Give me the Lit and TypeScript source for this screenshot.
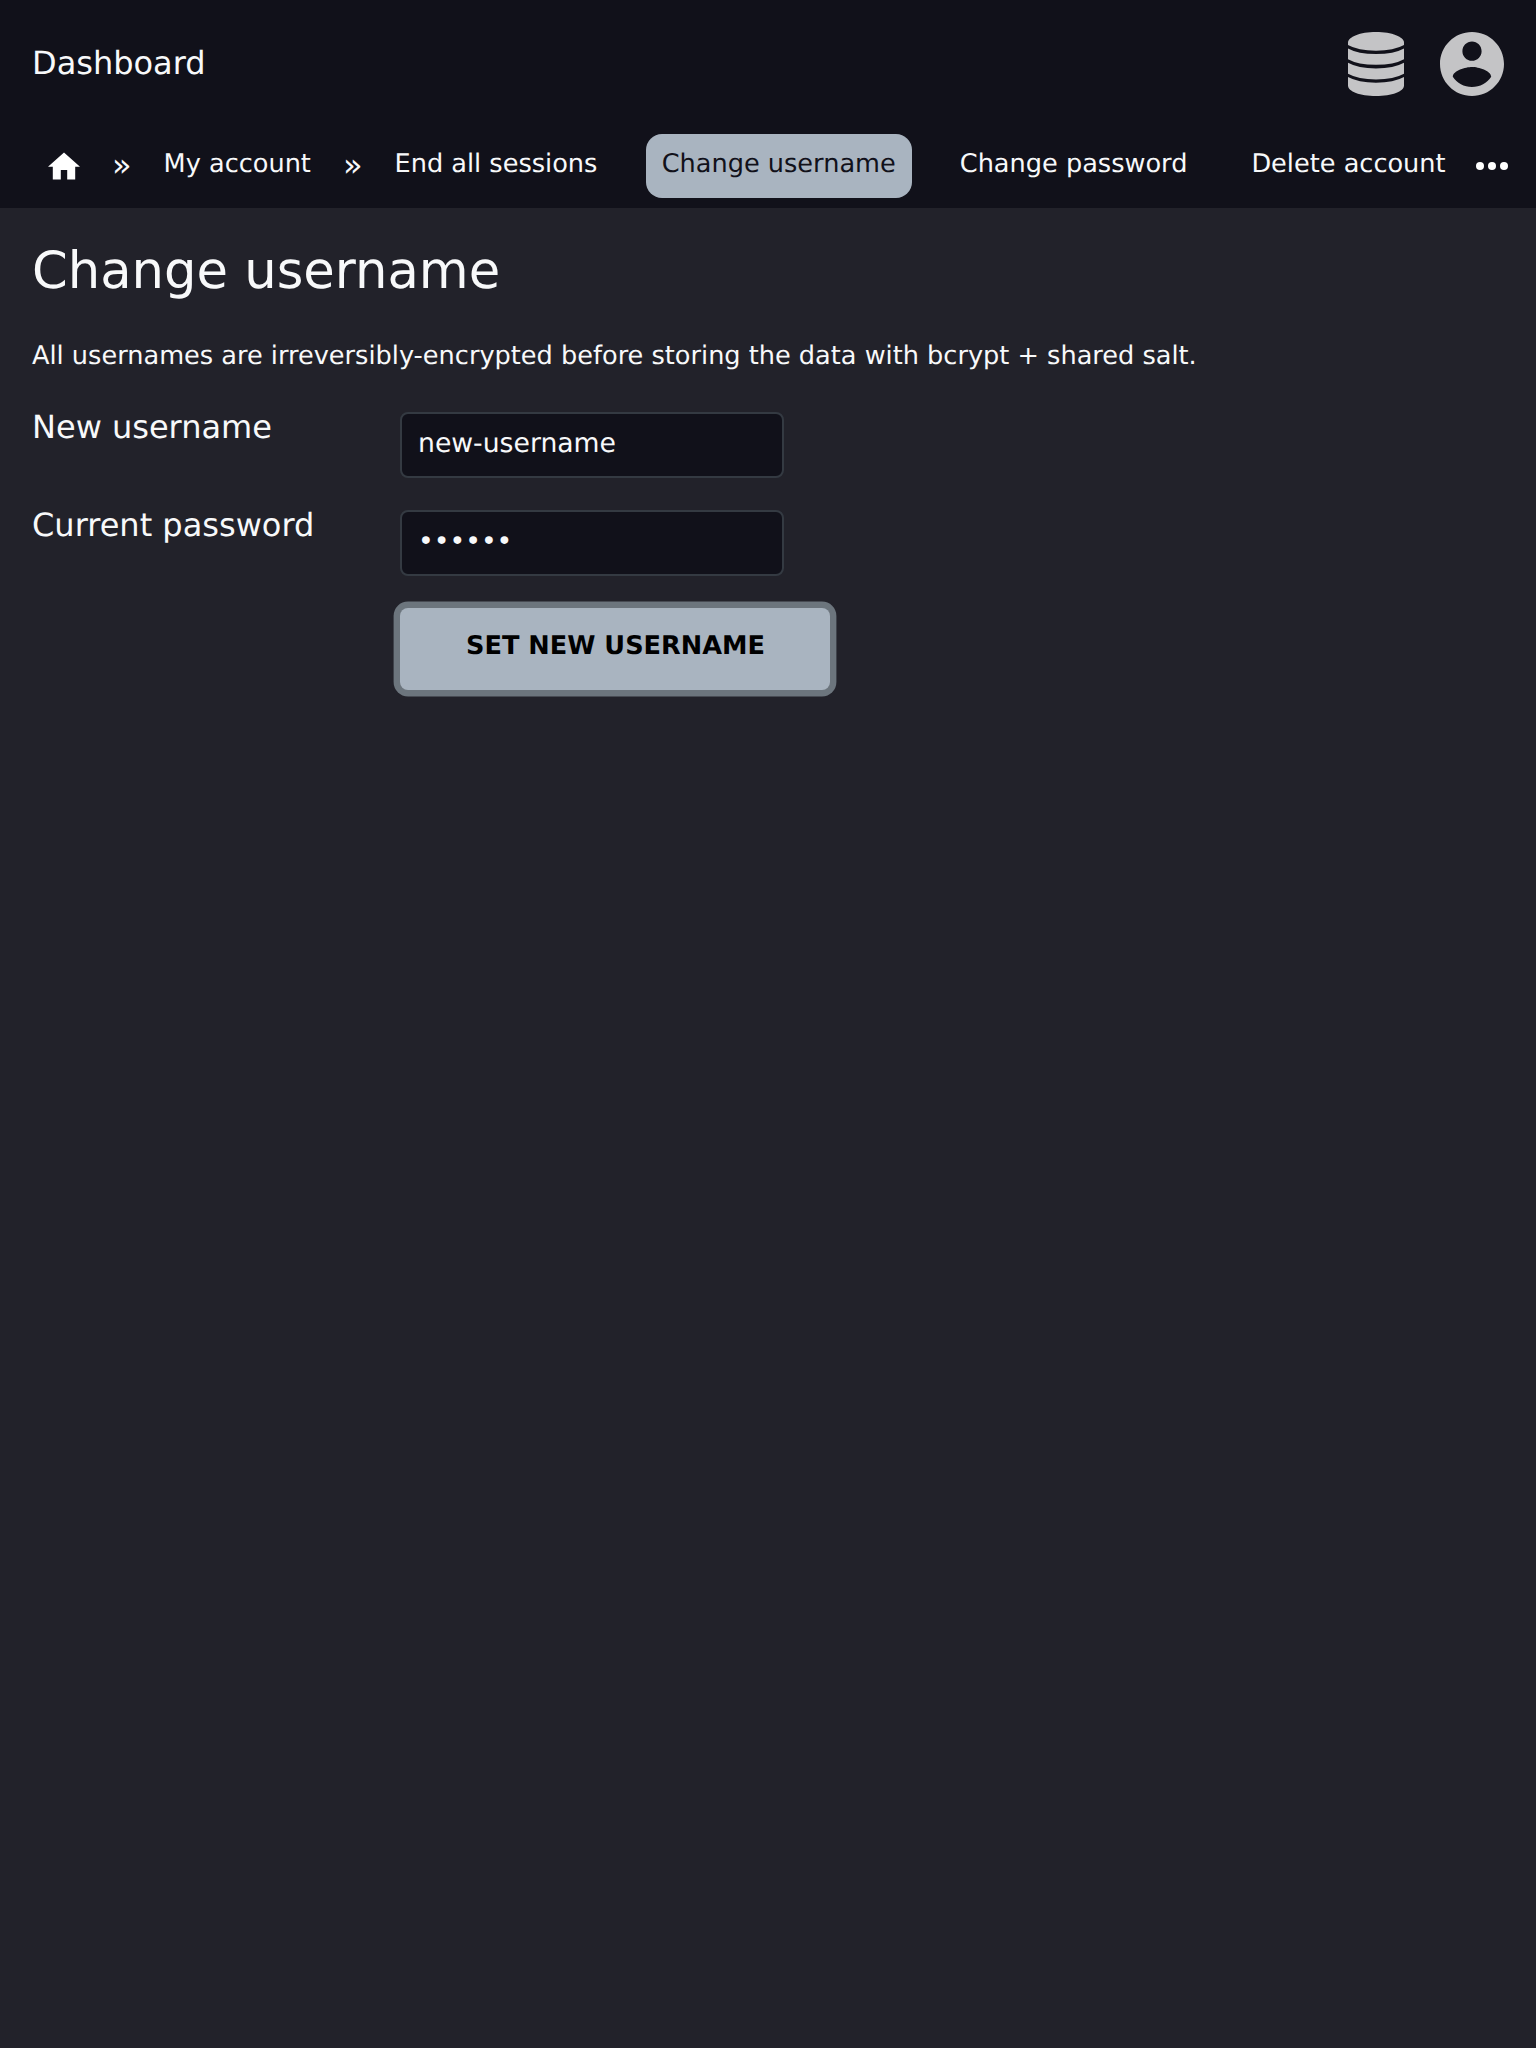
import { LitElement, html, css } from "lit";
import { customElement } from "lit/decorators.js";

@customElement("app-root")
export class AppRoot extends LitElement {
  static styles = css`
    :host { display: block; min-height: 2048px; background: #22222a; color: #f8f9fa;
      font-family: "DejaVu Sans", sans-serif; font-size: 25.6px; text-rendering: geometricPrecision; }
    * { box-sizing: border-box; }
    header { background: #11111a; height: 208px; }
    .top { display: flex; align-items: center; height: 128px; padding: 0 32px; gap: 32px; }
    .brand { font-size: 32px; line-height: 40px; padding-bottom: 2px; margin-right: auto; }
    svg { display: block; flex: none; }
    .big { width: 64px; height: 64px; fill: #c4c4c6; }
    nav { display: flex; height: 64px; margin-top: 6px; padding-left: 32px; white-space: nowrap; }
    .link { height: 64px; line-height: 60px; padding: 0 16px; border-radius: 16px; margin-right: 32px; }
    .link.crumb { margin-right: 0; }
    .link.active { background: #a9b4c0; color: #11111a; margin-left: 0.3px; }
    .home { padding: 16px; }
    .sep { font-size: 32px; line-height: 62px; padding: 0 16px; }
    .white { width: 32px; height: 32px; fill: #fff; }
    .more { padding: 16px 28px 0 0; margin-left: auto; }
    main { padding: 0 32px; }
    h1 { margin: 0; padding-top: 33px; font-size: 51.2px; font-weight: 400; line-height: 60px; }
    p { margin: 0; padding-top: 40px; line-height: 30px; }
    form { display: grid; grid-template-columns: 368px 430px; row-gap: 32px; padding-top: 41px; }
    label { font-size: 32px; line-height: 30px; }
    input { font: 26.67px/30px "DejaVu Sans", sans-serif; color: #f8f9fa; background: #11111a;
      border: 2px solid #343a42; border-radius: 8px; width: 384px; height: 66px; margin: 0;
      padding: 12px 16px 16px; outline: none; text-rendering: inherit; }
    button { grid-column: 2; font: bold 25.6px/30px "DejaVu Sans", sans-serif; color: #000; background: #a9b4c0;
      border: 0; border-radius: 8px; width: 430px; height: 82px; padding: 0 0 6px 1px;
      box-shadow: 0 0 0 6.4px #6c757d; text-rendering: inherit; }
  `;
  render() {
    return html`
      <header>
        <div class="top">
          <span class="brand">Dashboard</span>
          <svg class="big" viewBox="0 0 64 64"><path d="M4 10.500C4 5 16 0 32 0S60 5 60 10.500V13Q50 18.700 32 18.700T4 13Z"/><path d="M4 16.400Q14 22 32 22T60 16.400V27.200Q50 32.800 32 32.800T4 27.200Z"/><path d="M4 30.800Q14 36.400 32 36.400T60 30.800V41.800Q50 47.400 32 47.400T4 41.800Z"/><path d="M4 45.100Q14 50.700 32 50.700T60 45.100V53.500C60 59.500 48 64 32 64S4 59.500 4 53.500Z"/></svg>
          <svg class="big" viewBox="2 2 20 20"><path d="M12 2C6.480 2 2 6.480 2 12s4.480 10 10 10 10-4.480 10-10S17.520 2 12 2zm0 3c1.660 0 3 1.340 3 3s-1.340 3-3 3-3-1.340-3-3 1.340-3 3-3zm0 14.200c-2.500 0-4.710-1.280-6-3.220.03-1.990 4-3.080 6-3.080 1.990 0 5.970 1.090 6 3.080-1.290 1.940-3.500 3.220-6 3.220z"/></svg>
        </div>
        <nav>
          <a class="link crumb home"><svg class="white" viewBox="2 1.500 20 20"><path d="M10 20v-6h4v6h5v-8h3L12 3 2 12h3v8z"/></svg></a>
          <span class="sep">»</span>
          <a class="link crumb">My account</a>
          <span class="sep">»</span>
          <a class="link">End all sessions</a>
          <a class="link active">Change username</a>
          <a class="link">Change password</a>
          <a class="link crumb">Delete account</a>
          <span class="more"><svg class="white" viewBox="0 0 32 32"><circle cx="4" cy="16" r="4"/><circle cx="16" cy="16" r="4"/><circle cx="28" cy="16" r="4"/></svg></span>
        </nav>
      </header>
      <main>
        <h1>Change username</h1>
        <p>All usernames are irreversibly-encrypted before storing the data with bcrypt + shared salt.</p>
        <form>
          <label for="u">New username</label>
          <input id="u" type="text" value="new-username">
          <label for="p">Current password</label>
          <input id="p" type="password" value="secret">
          <button type="button">SET NEW USERNAME</button>
        </form>
      </main>`;
  }
}
